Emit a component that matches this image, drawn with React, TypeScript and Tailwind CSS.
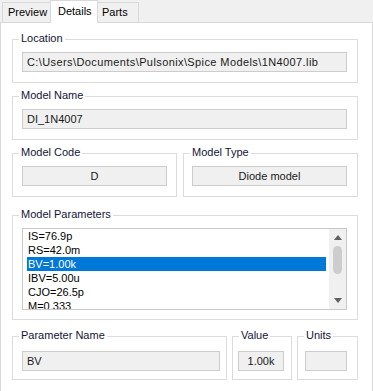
const params = ["IS=76.9p", "RS=42.0m", "BV=1.00k", "IBV=5.00u", "CJO=26.5p", "M=0.333"];

function Group({
  label,
  className = "",
  children,
}: {
  label: string;
  className?: string;
  children: React.ReactNode;
}) {
  return (
    <div className={`relative border border-[#dcdcdc] ${className}`}>
      <span className="absolute left-[6px] top-[-8px] bg-white px-[2px] leading-[13px] text-[#141438]">
        {label}
      </span>
      {children}
    </div>
  );
}

function Field({
  value,
  center = false,
  className = "",
}: {
  value: string;
  center?: boolean;
  className?: string;
}) {
  return (
    <div
      className={`flex h-[20px] items-center border border-[#cccccc] bg-[#f0f0f0] leading-[13px] text-[#1a1a1a] ${
        center ? "justify-center" : "pl-[4px]"
      } ${className}`}
    >
      {value}
    </div>
  );
}

function Arrow({ down = false }: { down?: boolean }) {
  return (
    <div className="flex h-[17px] items-center justify-center">
      <svg width="8" height="5" viewBox="0 0 8 5">
        <path d={down ? "M0 0 L8 0 L4 5 Z" : "M0 5 L4 0 L8 5 Z"} fill="#606060" />
      </svg>
    </div>
  );
}

export default function App() {
  return (
    <div className="h-[391px] w-[373px] overflow-hidden bg-[#f0f0f0] font-['Liberation_Sans',Arial,sans-serif] text-[11px] text-black">
      {/* tab strip */}
      <div className="flex h-[23px] items-end">
        <div className="h-[1px] w-[2px] bg-[#d9d9d9]" />
        <div className="flex h-[21px] w-[48px] items-center border-b border-l border-t border-[#d9d9d9] pl-[5px] leading-[13px]">
          Preview
        </div>
        <div className="flex h-[23px] w-[48px] items-start border-l border-r border-t border-[#d9d9d9] bg-white pl-[7px] pt-[4px] leading-[13px]">
          Details
        </div>
        <div className="flex h-[21px] w-[41px] items-center border-b border-r border-t border-[#d9d9d9] pl-[4px] leading-[13px]">
          Parts
        </div>
        <div className="h-[1px] flex-1 bg-[#d9d9d9]" />
      </div>

      {/* panel */}
      <div className="flex h-[368px] flex-col border-l border-r border-[#d9d9d9] bg-white pl-[11px] pr-[14px] pt-[16px]">
        <Group label="Location" className="h-[44px] pl-[9px] pr-[10px] pt-[12px]">
          <Field value="C:\Users\Documents\Pulsonix\Spice Models\1N4007.lib" className="tracking-[0.4px]" />
        </Group>

        <Group label="Model Name" className="mt-[13px] h-[44px] pl-[9px] pr-[10px] pt-[12px]">
          <Field value="DI_1N4007" />
        </Group>

        <div className="mt-[13px] flex gap-[6px]">
          <Group label="Model Code" className="h-[44px] w-[165px] pl-[9px] pr-[9px] pt-[12px]">
            <Field value="D" center />
          </Group>
          <Group label="Model Type" className="h-[44px] w-[175px] pl-[8px] pr-[10px] pt-[12px]">
            <Field value="Diode model" center />
          </Group>
        </div>

        <Group label="Model Parameters" className="mt-[18px] h-[105px] pl-[9px] pr-[10px] pt-[12px]">
          <div className="flex h-[82px] border border-[#c8c8c8] bg-white">
            <div className="flex-1 overflow-hidden pl-[4px] pr-[3px]">
              {params.map((p) => (
                <div
                  key={p}
                  className={`h-[14px] pl-[1px] leading-[14px] ${
                    p === "BV=1.00k" ? "bg-[#0078d7] text-white" : "text-black"
                  }`}
                >
                  {p}
                </div>
              ))}
            </div>
            <div className="flex w-[17px] flex-col bg-[#f0f0f0]">
              <Arrow />
              <div className="mx-auto h-[28px] w-[9px] rounded-full bg-[#cdcdcd]" />
              <div className="flex-1" />
              <Arrow down />
            </div>
          </div>
        </Group>

        <div className="mt-[16px] flex gap-[5px]">
          <Group label="Parameter Name" className="h-[44px] w-[215px] pl-[9px] pr-[6px] pt-[14px]">
            <Field value="BV" />
          </Group>
          <Group label="Value" className="h-[44px] w-[60px] pl-[5px] pr-[7px] pt-[14px]">
            <Field value="1.00k" center />
          </Group>
          <Group label="Units" className="h-[44px] w-[61px] pl-[7px] pr-[10px] pt-[14px]">
            <Field value="" />
          </Group>
        </div>
      </div>
    </div>
  );
}
